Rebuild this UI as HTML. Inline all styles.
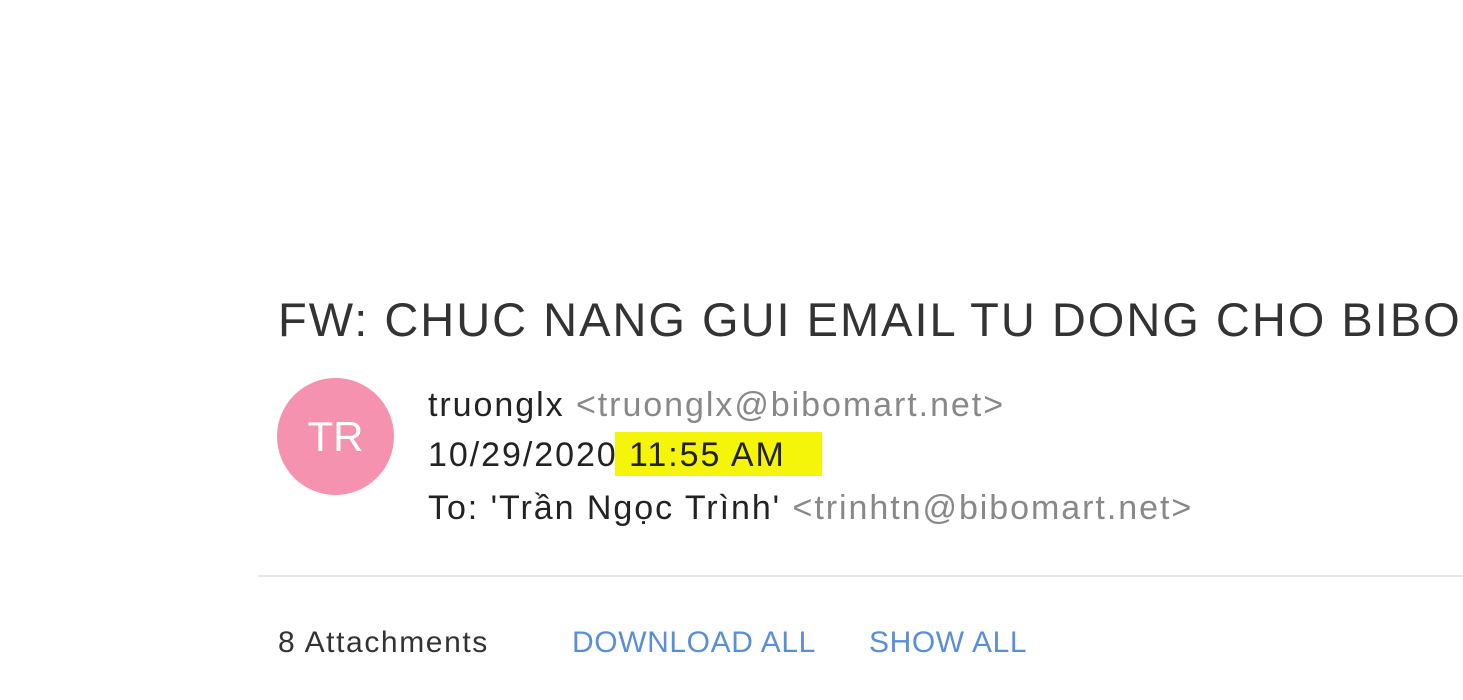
<!DOCTYPE html>
<html><head><meta charset="utf-8"><style>
body{margin:0;width:1463px;height:700px;overflow:hidden;background:#fff;font-family:"Liberation Sans",sans-serif;position:relative}
.t{position:absolute;white-space:nowrap}
#title{left:278px;top:292px;width:1185px;overflow:hidden;font-size:47px;color:#333;letter-spacing:2px}
#av{position:absolute;left:277px;top:378px;width:117px;height:117px;border-radius:50%;background:#f592b0;color:#fff;font-size:42px;text-align:center;line-height:117px}
.l{font-size:34px;color:#222;left:428px;letter-spacing:1.95px}
.g{color:#888}
#hl{position:absolute;left:615px;top:432px;width:207px;height:44px;background:#f5f50a}
#sep{position:absolute;left:258px;top:575px;width:1205px;height:2px;background:#e6e6e6}
.a{font-size:30px;top:626px;letter-spacing:1.6px}
.b{color:#5b8ed8;letter-spacing:0.6px}
</style></head><body>
<div class="t" id="title">FW: CHUC NANG GUI EMAIL TU DONG CHO BIBOMART</div>
<div id="av">TR</div>
<div id="hl"></div>
<div class="t l" style="top:386px">truonglx <span class="g">&lt;truonglx@bibomart.net&gt;</span></div>
<div class="t l" style="top:436px">10/29/2020 11:55 AM</div>
<div class="t l" style="top:489px">To: 'Trần Ngọc Trình' <span class="g">&lt;trinhtn@bibomart.net&gt;</span></div>
<div id="sep"></div>
<div class="t a" style="left:278px;color:#333">8 Attachments</div>
<div class="t a b" style="left:572px">DOWNLOAD ALL</div>
<div class="t a b" style="left:869px">SHOW ALL</div>
</body></html>
